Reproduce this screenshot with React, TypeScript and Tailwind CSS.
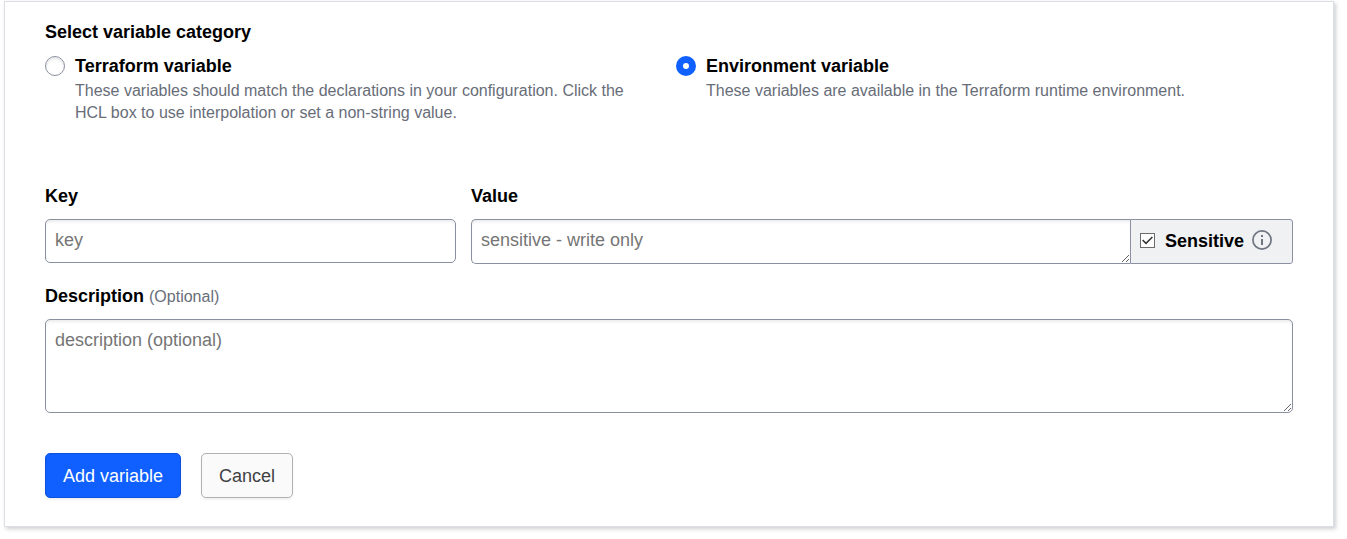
import { useState } from "react";

const field =
  "block w-full border border-[#8b90a0] bg-white px-[9px] text-[18px] leading-[22px] text-black placeholder:text-[#757575] shadow-[inset_0_3px_3px_-1px_rgba(0,0,0,0.08)] focus:outline-none focus:border-[#1060ff]";

const label = "block text-[18px] leading-[22px] font-bold text-black";

type CategoryProps = {
  value: string;
  title: string;
  description: string;
  selected: boolean;
  onSelect: (value: string) => void;
};

function CategoryOption({ value, title, description, selected, onSelect }: CategoryProps) {
  return (
    <div className="flex items-start gap-[10px] pr-5">
      <input
        type="radio"
        id={value}
        name="category"
        checked={selected}
        onChange={() => onSelect(value)}
        aria-describedby={`${value}-help`}
        className="mt-px size-5 shrink-0 appearance-none rounded-full border border-[#8b90a0] bg-white shadow-[inset_0_2px_3px_rgba(0,0,0,0.1)] checked:border-[7px] checked:border-[#1060ff] checked:shadow-none"
      />
      <div>
        <label htmlFor={value} className={label}>
          {title}
        </label>
        <p id={`${value}-help`} className="mt-[3px] text-[16px] leading-[22px] text-[#686d78]">
          {description}
        </p>
      </div>
    </div>
  );
}

function InfoIcon() {
  return (
    <svg width="20" height="20" viewBox="0 0 20 20" fill="none" aria-hidden="true">
      <circle cx="10" cy="10" r="9.1" stroke="#6f7682" strokeWidth="1.7" />
      <rect x="9" y="5" width="2" height="2" fill="#6f7682" />
      <rect x="9" y="9" width="2" height="6" fill="#6f7682" />
    </svg>
  );
}

export default function App() {
  const [category, setCategory] = useState("environment");
  const [sensitive, setSensitive] = useState(true);

  return (
    <div className="bg-white pt-px pr-[13px] pb-3 pl-1 font-['Liberation_Sans',Arial,sans-serif]">
      <form
        onSubmit={(e) => e.preventDefault()}
        className="border border-[#dcdee3] bg-white px-10 pt-[19px] pb-7 shadow-[2px_2px_4px_rgba(90,95,110,0.3)]"
      >
        <fieldset>
          <legend className={label}>Select variable category</legend>
          <div className="mt-3 grid grid-cols-2 gap-[14px]">
            <CategoryOption
              value="terraform"
              title="Terraform variable"
              description="These variables should match the declarations in your configuration. Click the HCL box to use interpolation or set a non-string value."
              selected={category === "terraform"}
              onSelect={setCategory}
            />
            <CategoryOption
              value="environment"
              title="Environment variable"
              description="These variables are available in the Terraform runtime environment."
              selected={category === "environment"}
              onSelect={setCategory}
            />
          </div>
        </fieldset>

        <div className="mt-[61px] grid grid-cols-[1fr_2fr] gap-[15px]">
          <div>
            <label htmlFor="key" className={label}>
              Key
            </label>
            <input id="key" type="text" placeholder="key" className={`${field} mt-3 h-11 rounded-[5px] pb-[2px]`} />
          </div>
          <div>
            <label htmlFor="value" className={label}>
              Value
            </label>
            <div className="mt-3 flex items-stretch">
              <div className="min-w-0 flex-1">
                <textarea
                  id="value"
                  rows={1}
                  placeholder="sensitive - write only"
                  className={`${field} h-[45px] resize rounded-l-[5px] border-r-0 pt-[9px]`}
                />
              </div>
              <div className="flex w-[163px] items-center rounded-r-[3px] border border-[#8b90a0] bg-[#f0f1f3] pb-[2px] pl-[9px]">
                <span className="grid size-[15px] place-items-center">
                  <input
                    id="sensitive"
                    type="checkbox"
                    checked={sensitive}
                    onChange={(e) => setSensitive(e.target.checked)}
                    className="peer col-start-1 row-start-1 size-[15px] appearance-none border border-[#6b6b6b] bg-white"
                  />
                  <svg
                    className="pointer-events-none invisible col-start-1 row-start-1 peer-checked:visible"
                    width="15"
                    height="15"
                    viewBox="0 0 15 15"
                    fill="none"
                    aria-hidden="true"
                  >
                    <path d="M2.6 7L6 10.4L12.4 4" stroke="#333" strokeWidth="1.5" />
                  </svg>
                </span>
                <label htmlFor="sensitive" className="ml-[10px] text-[18px] leading-[22px] font-bold text-black">
                  Sensitive
                </label>
                <button type="button" aria-label="About sensitive values" className="mb-[2px] ml-2">
                  <InfoIcon />
                </button>
              </div>
            </div>
          </div>
        </div>

        <div className="mt-[21px]">
          <label htmlFor="description" className={label}>
            Description <span className="text-[16px] leading-4 font-normal text-[#686d78]">(Optional)</span>
          </label>
          <textarea
            id="description"
            placeholder="description (optional)"
            className={`${field} mt-3 h-[94px] resize rounded-[5px] pt-[9px]`}
          />
        </div>

        <div className="mt-10 flex gap-5">
          <button
            type="submit"
            className="h-[45px] rounded-[5px] border border-[#0d51dd] bg-[#1060ff] px-[17px] text-[18px] leading-[22px] text-white shadow-[0_2px_2px_rgba(0,0,0,0.06)]"
          >
            Add variable
          </button>
          <button
            type="button"
            className="h-[45px] rounded-[5px] border border-[#b0b0b3] bg-[#fafafa] px-[17px] text-[18px] leading-[22px] text-[#3f4145] shadow-[0_2px_2px_rgba(0,0,0,0.06)]"
          >
            Cancel
          </button>
        </div>
      </form>
    </div>
  );
}
